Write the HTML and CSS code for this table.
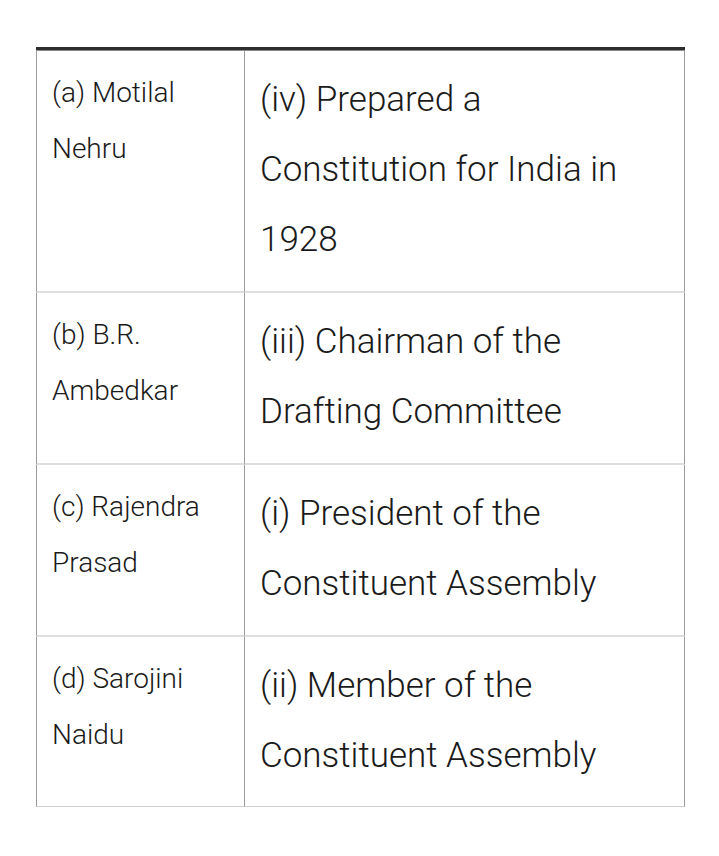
FILE: index.html
```html
<!DOCTYPE html>
<html>
<head>
<meta charset="utf-8">
<link rel="stylesheet" href="styles.css">
</head>
<body>
<div class="wrap">
  <table class="match">
    <tbody>
      <tr>
        <td class="name">(a) Motilal Nehru</td>
        <td class="desc">(iv) Prepared a Constitution for India in 1928</td>
      </tr>
      <tr>
        <td class="name">(b) B.R. Ambedkar</td>
        <td class="desc">(iii) Chairman of the Drafting Committee</td>
      </tr>
      <tr>
        <td class="name">(c) Rajendra Prasad</td>
        <td class="desc">(i) President of the Constituent Assembly</td>
      </tr>
      <tr>
        <td class="name">(d) Sarojini Naidu</td>
        <td class="desc">(ii) Member of the Constituent Assembly</td>
      </tr>
    </tbody>
  </table>
</div>
</body>
</html>
```

FILE: styles.css
```css
html, body {
  margin: 0;
  padding: 0;
  background: #ffffff;
}
body {
  font-family: Roboto, "Noto Sans", sans-serif;
  font-weight: 300;
  color: #1a1a1a;
}
.wrap {
  padding: 47px 34px 0 36px;
}
.match {
  width: 649px;
  border-collapse: separate;
  border-spacing: 0;
  border-top: 3px solid #2d2d2d;
}
.match tr:first-child td {
  border-top: 1px solid #8a8a8a;
}
.match td {
  vertical-align: top;
  border-bottom: 2px solid #dedede;
  padding: 14px 15px 16px 15px;
}
.match tr:last-child td {
  border-bottom: 1px solid #d0d0d0;
  padding-bottom: 15px;
}
.name {
  width: 177px;
  border-left: 1px solid #9a9a9a;
  border-right: 1px solid #9a9a9a;
  font-size: 28px;
  line-height: 56px;
  padding-top: 11px;
}
.desc {
  border-right: 1px solid #9a9a9a;
  font-size: 35px;
  line-height: 70px;
  padding-left: 14px;
}
```
